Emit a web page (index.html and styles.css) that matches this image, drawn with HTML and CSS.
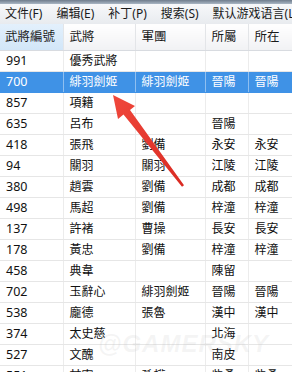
FILE: index.html
```html
<!DOCTYPE html>
<html lang="zh-Hant">
<head>
    <meta charset="UTF-8">
    <title>武將列表</title>
    <link rel="stylesheet" href="styles.css">
</head>
<body>
    <div class="window">
        <div class="frame-top"></div>
        <div class="menubar">
            <span class="menu-item">文件(F)</span>
            <span class="menu-item">编辑(E)</span>
            <span class="menu-item">补丁(P)</span>
            <span class="menu-item">搜索(S)</span>
            <span class="menu-item">默认游戏语言(L)</span>
        </div>

        <table class="list">
            <colgroup>
                <col class="c-id">
                <col class="c-name">
                <col class="c-army">
                <col class="c-owner">
                <col class="c-city">
            </colgroup>
            <thead>
                <tr>
                    <th class="sorted">武將編號</th>
                    <th>武將</th>
                    <th>軍團</th>
                    <th>所屬</th>
                    <th>所在</th>
                </tr>
            </thead>
            <tbody>
                <tr><td class="num">991</td><td>優秀武將</td><td></td><td></td><td></td></tr>
                <tr class="selected"><td class="num">700</td><td>緋羽劍姬</td><td>緋羽劍姬</td><td>晉陽</td><td>晉陽</td></tr>
                <tr><td class="num">857</td><td>項籍</td><td></td><td></td><td></td></tr>
                <tr><td class="num">635</td><td>呂布</td><td></td><td>晉陽</td><td></td></tr>
                <tr><td class="num">418</td><td>張飛</td><td>劉備</td><td>永安</td><td>永安</td></tr>
                <tr><td class="num">94</td><td>關羽</td><td>關羽</td><td>江陵</td><td>江陵</td></tr>
                <tr><td class="num">380</td><td>趙雲</td><td>劉備</td><td>成都</td><td>成都</td></tr>
                <tr><td class="num">498</td><td>馬超</td><td>劉備</td><td>梓潼</td><td>梓潼</td></tr>
                <tr><td class="num">137</td><td>許褚</td><td>曹操</td><td>長安</td><td>長安</td></tr>
                <tr><td class="num">178</td><td>黃忠</td><td>劉備</td><td>梓潼</td><td>梓潼</td></tr>
                <tr><td class="num">458</td><td>典韋</td><td></td><td>陳留</td><td></td></tr>
                <tr><td class="num">702</td><td>玉辭心</td><td>緋羽劍姬</td><td>晉陽</td><td>晉陽</td></tr>
                <tr><td class="num">538</td><td>龐德</td><td>張魯</td><td>漢中</td><td>漢中</td></tr>
                <tr><td class="num">374</td><td>太史慈</td><td></td><td>北海</td><td></td></tr>
                <tr><td class="num">527</td><td>文醜</td><td></td><td>南皮</td><td></td></tr>
                <tr><td class="num">551</td><td>甘寧</td><td>孫權</td><td>柴桑</td><td>柴桑</td></tr>
            </tbody>
        </table>

        <!-- overlays: site watermark and the red pointer arrow -->
        <div class="watermark">@GAMERSKY</div>
        <svg class="arrow" width="292" height="372" viewBox="0 0 292 372">
            <defs>
                <linearGradient id="arrowFill" x1="0" y1="0" x2="1" y2="1">
                    <stop offset="0" stop-color="#f0483c"/>
                    <stop offset="1" stop-color="#d92a22"/>
                </linearGradient>
            </defs>
            <polygon fill="url(#arrowFill)"
                points="113,95 135,106 130,110 184,185.2 182,186.8 123.5,114.5 118,119"/>
        </svg>
    </div>
</body>
</html>
```

FILE: styles.css
```css
body {
    margin: 0;
    padding: 0;
    background-color: white;
    font-family: "Noto Sans", "Noto Sans CJK TC", sans-serif;
    color: #111;
}

.window {
    position: relative;
    width: 292px;
    height: 372px;
    overflow: hidden;
    background-color: white;
}

.frame-top {
    height: 4px;
    background: linear-gradient(to bottom, #6f7c8c, #a9b6c4);
}

.menubar {
    display: flex;
    align-items: center;
    gap: 14px;
    height: 20px;
    padding-left: 5px;
    background: linear-gradient(to bottom, #f7f8fa, #e8ebef);
    white-space: nowrap;
    font-family: "Noto Sans", "Noto Sans CJK SC", sans-serif;
    font-size: 12px;
    line-height: 20px;
    color: #1a1a1a;
}

.list {
    border-collapse: collapse;
    table-layout: fixed;
    width: 320px;
    font-size: 12px;
}

.c-id { width: 63px; }
.c-name { width: 72px; }
.c-army { width: 70px; }
.c-owner { width: 43px; }
.c-city { width: 72px; }

.list th {
    height: 26px;
    padding: 0 0 0 6px;
    text-align: left;
    font-weight: normal;
    font-size: 12.5px;
    line-height: 26px;
    color: #1a1a1a;
    background: linear-gradient(to bottom, #ffffff, #f1f2f4);
    border-right: 1px solid #e3e5e8;
    border-bottom: 1px solid #d8dbe0;
    white-space: nowrap;
    overflow: hidden;
}

.list th.sorted {
    background: linear-gradient(to bottom, #e3f0fc, #d2e6f8);
    padding-left: 5px;
}

.list td {
    height: 20px;
    padding: 0 0 0 6px;
    line-height: 20px;
    border-right: 1px solid #ececec;
    border-bottom: 1px solid #e6e6e6;
    white-space: nowrap;
    overflow: hidden;
}

.list td.num {
    font-size: 12.5px;
}

.list tr.selected td {
    background-color: #3f92e6;
    color: white;
    border-right-color: #8fbff0;
    border-bottom-color: #3f92e6;
}

.watermark {
    position: absolute;
    left: 98px;
    top: 330px;
    font-family: "Liberation Sans", sans-serif;
    font-size: 24px;
    font-weight: bold;
    font-style: italic;
    letter-spacing: 1px;
    color: rgba(190, 190, 190, 0.16);
    pointer-events: none;
}

.arrow {
    position: absolute;
    left: 0;
    top: 0;
    pointer-events: none;
}
```
